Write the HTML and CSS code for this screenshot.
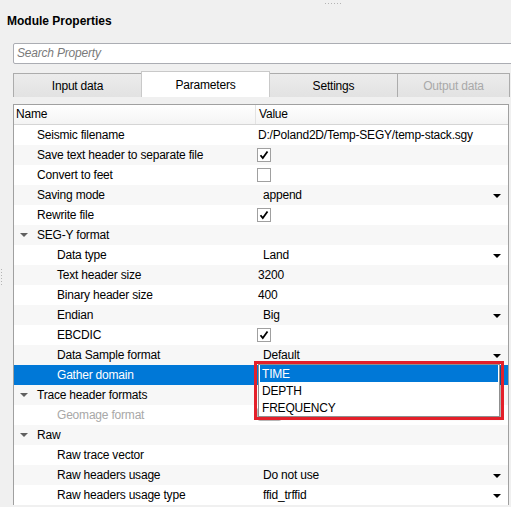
FILE: index.html
```html
<!DOCTYPE html>
<html lang="en">
<head>
    <meta charset="UTF-8">
    <title>Module Properties</title>
    <link rel="stylesheet" href="styles.css">
</head>
<body>
    <div class="grip-top"><span class="dots-h"></span></div>
    <div class="grip-left"></div>

    <div class="title">Module Properties</div>

    <div class="search">Search Property</div>

    <div class="tabs">
        <div class="tab">Input data</div>
        <div class="tab active">Parameters</div>
        <div class="tab">Settings</div>
        <div class="tab disabled">Output data</div>
    </div>

    <div class="table">
        <div class="head">
            <div class="hcell">Name</div>
            <div class="hcell sep">Value</div>
        </div>

        <div class="row">
            <div class="name l0">Seismic filename</div>
            <div class="value text">D:/Poland2D/Temp-SEGY/temp-stack.sgy</div>
        </div>
        <div class="row alt">
            <div class="name l0">Save text header to separate file</div>
            <div class="value"><span class="chk on"></span></div>
        </div>
        <div class="row">
            <div class="name l0">Convert to feet</div>
            <div class="value"><span class="chk"></span></div>
        </div>
        <div class="row alt">
            <div class="name l0">Saving mode</div>
            <div class="value combo">append<span class="arrow"></span></div>
        </div>
        <div class="row">
            <div class="name l0">Rewrite file</div>
            <div class="value"><span class="chk on"></span></div>
        </div>
        <div class="row alt">
            <div class="name group"><span class="tree"></span>SEG-Y format</div>
            <div class="value"></div>
        </div>
        <div class="row">
            <div class="name l1">Data type</div>
            <div class="value combo">Land<span class="arrow"></span></div>
        </div>
        <div class="row alt">
            <div class="name l1">Text header size</div>
            <div class="value text">3200</div>
        </div>
        <div class="row">
            <div class="name l1">Binary header size</div>
            <div class="value text">400</div>
        </div>
        <div class="row alt">
            <div class="name l1">Endian</div>
            <div class="value combo">Big<span class="arrow"></span></div>
        </div>
        <div class="row">
            <div class="name l1">EBCDIC</div>
            <div class="value"><span class="chk on"></span></div>
        </div>
        <div class="row alt">
            <div class="name l1">Data Sample format</div>
            <div class="value combo">Default<span class="arrow"></span></div>
        </div>
        <div class="row selected">
            <div class="name l1">Gather domain</div>
            <div class="value"></div>
        </div>
        <div class="row alt">
            <div class="name group"><span class="tree"></span>Trace header formats</div>
            <div class="value"></div>
        </div>
        <div class="row">
            <div class="name l1 muted">Geomage format</div>
            <div class="value"><span class="chk wide"></span></div>
        </div>
        <div class="row alt">
            <div class="name group"><span class="tree"></span>Raw</div>
            <div class="value"></div>
        </div>
        <div class="row">
            <div class="name l1">Raw trace vector</div>
            <div class="value"></div>
        </div>
        <div class="row alt">
            <div class="name l1">Raw headers usage</div>
            <div class="value combo">Do not use<span class="arrow"></span></div>
        </div>
        <div class="row">
            <div class="name l1">Raw headers usage type</div>
            <div class="value combo">ffid_trffid<span class="arrow"></span></div>
        </div>

        <!-- open combo list for Gather domain -->
        <div class="popup">
            <div class="item current">TIME</div>
            <div class="item">DEPTH</div>
            <div class="item">FREQUENCY</div>
        </div>
        <div class="mark"></div>
    </div>
</body>
</html>
```

FILE: styles.css
```css
body {
    margin: 0;
    background-color: #f0f0f0;
    font-family: "Liberation Sans", Arial, sans-serif;
    font-size: 12px;
    letter-spacing: -0.2px;
    color: #000;
    overflow: hidden;
    position: relative;
    height: 507px;
}

.grip-top {
    height: 8px;
    padding-left: 325px;
    display: flex;
    align-items: flex-start;
}

.dots-h {
    margin-top: 3px;
    width: 17px;
    height: 1px;
    background-image: linear-gradient(to right, #b4b4b4 1px, transparent 1px);
    background-size: 3px 1px;
}

.grip-left {
    position: absolute;
    left: 1px;
    top: 269px;
    width: 1px;
    height: 17px;
    background-image: linear-gradient(#b4b4b4 1px, transparent 1px);
    background-size: 1px 3px;
}

.title {
    height: 26px;
    line-height: 26px;
    padding-left: 7px;
    font-weight: bold;
    letter-spacing: 0;
}

.search {
    margin: 9px -4px 0 13px;
    height: 19px;
    line-height: 19px;
    border: 1px solid #abadb3;
    border-radius: 2px;
    background-color: #fff;
    padding-left: 3px;
    font-style: italic;
    color: #7a7a7a;
}

.tabs {
    display: flex;
    align-items: flex-end;
    margin: 7px 0 0 13px;
    height: 26px;
}

.tab {
    width: 127px;
    height: 23px;
    line-height: 24px;
    text-align: center;
    border: 1px solid #acacac;
    border-bottom: none;
    background: linear-gradient(#ececec, #e2e2e2);
    margin-right: -1px;
}

.tab.active {
    height: 25px;
    line-height: 27px;
    background: #fff;
    position: relative;
    z-index: 1;
    border-color: #c9c9c9;
}

.tab.disabled {
    color: #a9a9a9;
    width: 111px;
}

.table {
    position: relative;
    margin: 7px 0 0 13px;
    width: 494px;
    border: 1px solid #a0a0a0;
    border-bottom: none;
    background-color: #fff;
}

.head {
    display: grid;
    grid-template-columns: 241px 1fr;
    height: 19px;
    line-height: 19px;
    background: linear-gradient(#fff, #f4f4f4);
    border-bottom: 1px solid #d5d5d5;
}

.hcell {
    padding-left: 2px;
}

.hcell.sep {
    border-left: 1px solid #e3e3e3;
    padding-left: 3px;
}

.row {
    display: grid;
    grid-template-columns: 242px 1fr;
    height: 20px;
    line-height: 20px;
    background-color: #fff;
}

.row.alt {
    background-color: #f7f7f7;
}

.row.selected {
    background-color: #0078d7;
    color: #fff;
}

.name {
    white-space: nowrap;
}

.name.l0,
.name.group {
    padding-left: 23px;
}

.name.group {
    position: relative;
}

.name.l1 {
    padding-left: 43px;
}

.name.muted {
    color: #a8a8a8;
}

.tree {
    position: absolute;
    left: 6px;
    top: 8px;
    border-left: 4px solid transparent;
    border-right: 4px solid transparent;
    border-top: 4px solid #606060;
}

.value {
    position: relative;
    white-space: nowrap;
}

.value.text {
    padding-left: 2px;
}

.value.combo {
    padding-left: 7px;
}

.arrow {
    position: absolute;
    right: 7px;
    top: 9px;
    border-left: 4px solid transparent;
    border-right: 4px solid transparent;
    border-top: 4px solid #000;
}

.chk {
    display: inline-block;
    box-sizing: border-box;
    width: 14px;
    height: 14px;
    margin: 3px 0 0 1px;
    border: 1px solid #a0a0a0;
    background-color: #fff;
    vertical-align: top;
}

.chk.on {
    background-image: url("data:image/svg+xml,%3Csvg xmlns='http://www.w3.org/2000/svg' width='12' height='12'%3E%3Cpath d='M2.5 6.2 L4.8 9 L9.5 2.5' fill='none' stroke='%23000' stroke-width='1.8'/%3E%3C/svg%3E");
    background-repeat: no-repeat;
}

.chk.wide {
    width: 25px;
    border-color: #bcbcbc;
    border-radius: 3px;
    margin-top: 2px;
    margin-left: 1px;
}

.popup {
    position: absolute;
    left: 244px;
    top: 259px;
    width: 240px;
    height: 51px;
    border: 1px solid #8f8f8f;
    background-color: #fff;
    box-shadow: 2px 2px 2px rgba(0, 0, 0, 0.3);
    z-index: 2;
}

.item {
    height: 17px;
    line-height: 18px;
    padding-left: 3px;
}

.item.current {
    background-color: #0078d7;
    color: #fff;
    margin: 0 1px;
    padding-left: 2px;
}

.mark {
    position: absolute;
    left: 240px;
    top: 256px;
    width: 250px;
    height: 59px;
    box-sizing: border-box;
    border: 3px solid #e4202a;
    z-index: 3;
}
```
